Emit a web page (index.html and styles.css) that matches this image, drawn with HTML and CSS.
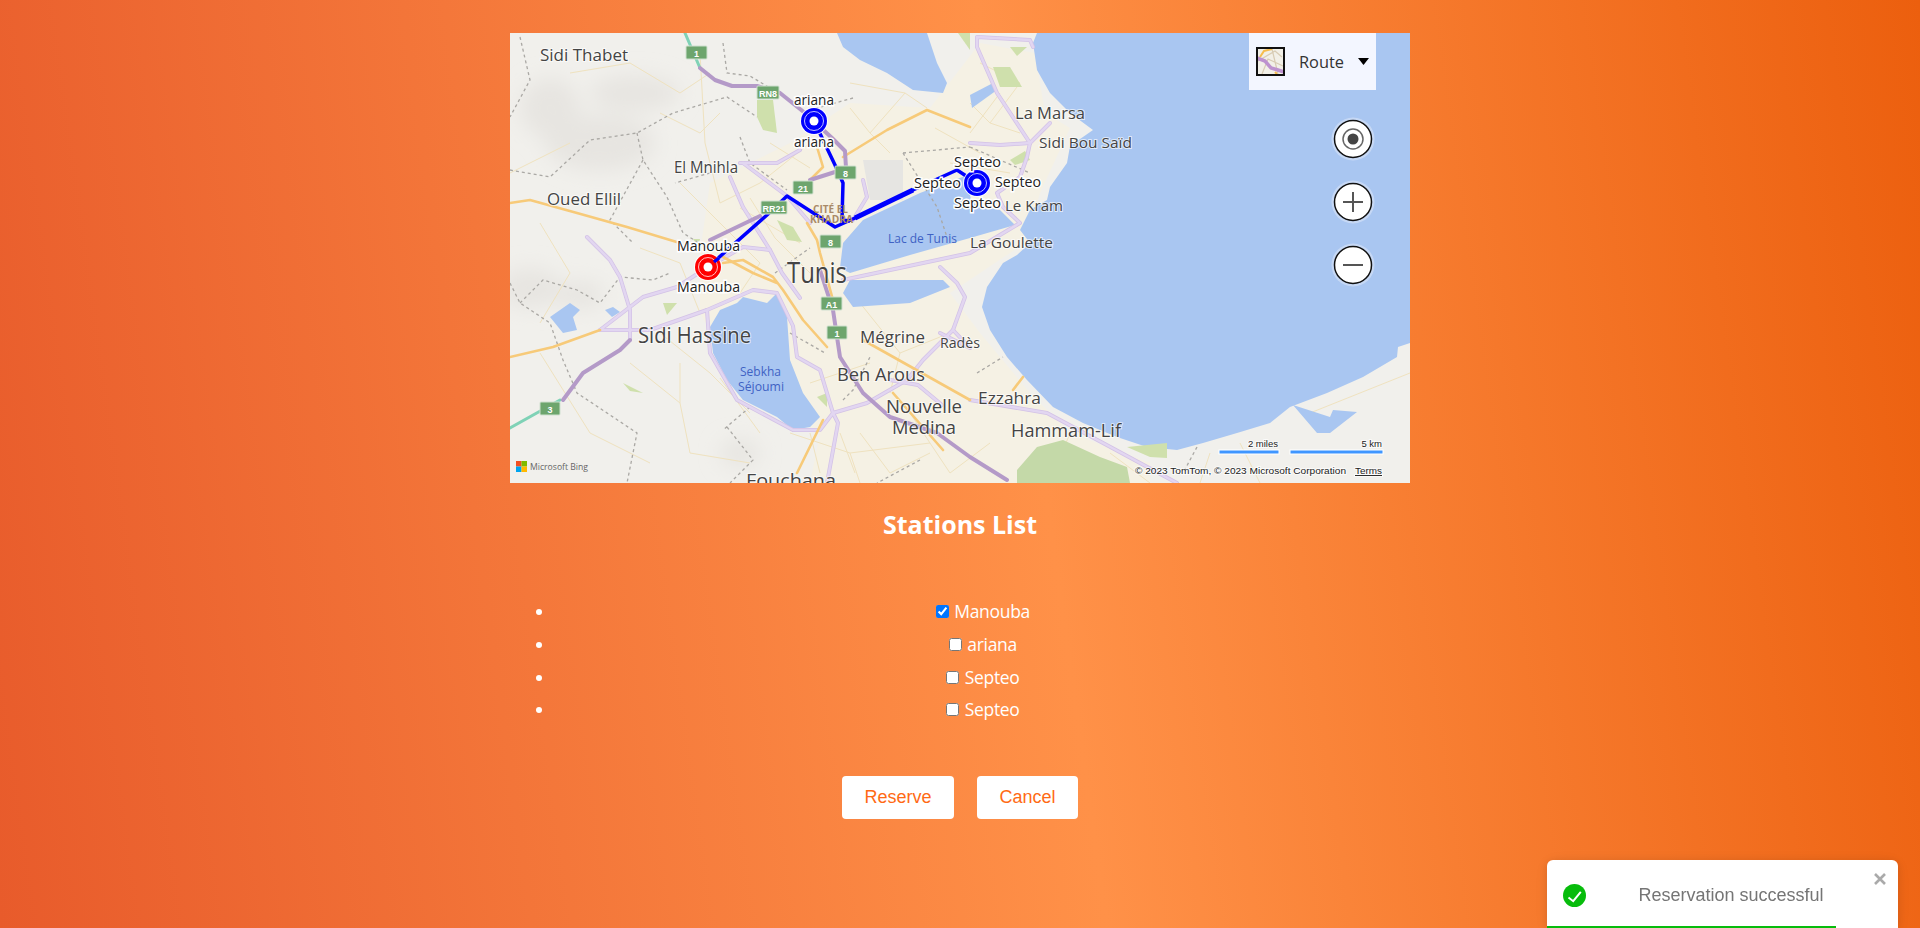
FILE: index.html
```html
<!DOCTYPE html>
<html lang="en">
<head>
<meta charset="utf-8">
<title>Stations List</title>
<link rel="stylesheet" href="styles.css">
</head>
<body>
<main class="page">
  <div class="map">
    <svg class="map-svg" viewBox="0 0 900 450" width="900" height="450" aria-label="Map of Tunis">
      <defs>
        <filter id="blur" x="-40%" y="-40%" width="180%" height="180%"><feGaussianBlur stdDeviation="10"/></filter>
        <g id="sec">
          <path d="M90,297 133,264 167,254 198,234 233,214 260,217"/>
          <path d="M90,297 140,297 197,277 243,257 267,260 283,293 287,324 310,337 323,380 328,390 317,450"/>
          <path d="M197,277 200,320 227,367 283,397 310,397 323,380 357,370 397,347 413,327 443,297 455,264 447,250 430,234"/>
          <path d="M120,307 120,277 110,244 100,227 77,204"/>
          <path d="M220,144 233,174 260,217 272,240 290,265"/>
          <path d="M230,130 267,130 290,117"/>
          <path d="M233,130 277,163 300,190"/>
          <path d="M353,147 357,164 343,187"/>
          <path d="M333,247 460,220 510,190 493,174 487,160 510,144 517,124 520,110 487,60 467,14 467,4 520,7 523,14"/>
          <path d="M520,110 540,90"/>
          <path d="M460,110 490,112 520,110"/>
          <path d="M460,367 537,380 593,410 667,450"/>
          <path d="M430,300 460,315 443,297"/>
          <path d="M380,347 408,352 432,372"/>
        </g>
      </defs>

      <rect class="land" width="900" height="450"/>
      <g class="hills" filter="url(#blur)">
        <ellipse cx="90" cy="110" rx="55" ry="28"/>
        <ellipse cx="125" cy="60" rx="45" ry="18"/>
        <ellipse cx="40" cy="75" rx="30" ry="30"/>
        <ellipse cx="20" cy="255" rx="30" ry="20"/>
        <ellipse cx="70" cy="262" rx="25" ry="14"/>
        <ellipse cx="230" cy="420" rx="20" ry="14"/>
      </g>
      <path class="city" d="M200,150 280,110 340,70 420,75 470,10 525,20 535,80 560,95 530,160 515,210 440,260 470,300 520,360 560,400 640,430 640,450 300,450 310,400 230,350 190,280 190,220Z"/>
      <path class="airport" d="M353,127 393,127 393,167 360,167Z"/>
      <path class="minor" d="M0,140 60,110M60,40 120,30 170,60 200,40M190,20 195,110 210,170M150,80 190,100 210,80M30,190 60,240 30,290M130,215 170,230 190,280M150,300 200,340 240,380M30,320 80,400 140,430M120,330 170,370 170,330M170,370 180,420 240,430M210,345 250,400M280,400 340,420 420,410M340,420 350,450M230,175 290,210M210,170 250,150 300,110M340,50 395,60 417,75M395,60 360,100 380,120M360,100 340,75M470,30 510,50 480,90 510,100M480,90 460,70M490,60 460,100M425,95 470,120M440,130 500,140M350,270 390,320 380,360M390,320 440,300M300,350 360,330M300,400 310,440M560,400 540,450M600,420 640,450M700,420 690,450M800,380 900,340M730,410 750,450M210,190 250,230 230,260M170,150 210,190M240,165 265,205 300,240M260,110 300,135M350,400 380,440 420,420M330,400 345,440M400,380 440,440 480,410"/>
      <g class="water">
        <path d="M327,0 333,14 350,27 377,40 403,57 433,60 437,50 427,30 417,0Z"/>
        <path d="M460,62 483,50 487,57 462,75Z"/>
        <path d="M527,0 523,10 527,37 540,60 560,80 583,97 560,113 557,130 540,154 537,167 520,177 510,197 520,210 507,222 493,230 477,254 472,274 480,297 497,324 517,347 543,374 573,390 607,404 637,414 667,417 693,410 727,400 760,390 780,374 817,360 853,344 887,324 888,314 900,310 900,0Z"/>
        <path d="M330,235 333,210 353,187 410,160 455,143 462,170 490,177 505,192 460,205 400,222 340,240Z"/>
        <path d="M340,247 333,260 343,274 400,270 440,254 433,247Z"/>
        <path d="M233,264 257,270 267,260 277,284 280,327 293,360 310,384 300,394 283,397 267,384 233,367 217,347 203,320 200,294 210,277 227,270Z"/>
        <path d="M40,284 60,270 70,277 63,284 67,297 53,300Z"/>
        <path d="M95,277 103,274 110,279 102,284Z"/>
        <path d="M783,372 807,400 820,400 847,379 823,377 820,384Z"/>
      </g>
      <g class="green">
        <path d="M247,67 263,67 267,100 253,97 247,84Z"/>
        <path d="M483,34 500,34 512,54 490,54Z"/>
        <path d="M500,14 517,14 507,23Z"/>
        <path d="M267,187 283,194 292,209 277,207Z"/>
        <path d="M153,270 167,270 157,282Z"/>
        <path d="M113,350 133,360 120,358Z"/>
        <path d="M307,364 317,360 317,374Z"/>
        <path d="M448,0 460,0 460,17Z"/>
        <path d="M183,206 190,206 188,214Z"/>
        <path d="M500,127 515,118 520,127 505,132Z"/>
        <path d="M617,414 657,410 657,425 640,424Z"/>
      </g>
      <path class="forest" d="M507,437 527,414 553,407 590,424 617,434 620,450 507,450Z"/>
      <path class="dashed" d="M10,4 20,47 0,84M0,137 40,144 80,107 127,100 163,80 217,64 247,84M343,65 300,77M213,10 217,40 240,43 290,73M230,104 240,130 277,157M127,100 133,127 157,164 173,200 200,217M133,127 100,187 123,210M0,250 10,270 40,290 53,327 67,360 127,400 117,450M10,270 33,247 67,257 90,270 110,244 143,247 160,240M217,394 243,427 220,450M240,374 213,397M333,367 343,357 360,324M410,427 367,450M687,414 673,440M467,340 493,324M393,120 427,174 437,204M393,120 460,114M460,114 520,140M280,300 315,320M200,140 165,150M265,240 300,215"/>
      <g fill="none" stroke-linejoin="round" stroke-linecap="round">
        <use href="#sec" class="sec-edge"/>
        <use href="#sec" class="sec-fill"/>
        <path class="teal" d="M175,0 190,35M50,367 0,395"/>
        <path class="orange" d="M0,170 20,167 67,180 117,194 170,210M213,224 243,240 267,250M0,324 43,314 90,297M213,230 233,227 263,244 273,257 293,287 317,314M333,124 377,97 417,77 460,94M307,114 313,134 300,147M297,190 307,207 310,220 323,267M383,360 433,417M313,387 287,440M513,344 503,357M353,307 460,367"/>
        <path class="motor" d="M190,35 205,47 222,53 247,53 270,60 295,80 322,105 335,118 336,135M300,147 325,139M200,207 250,183M120,307 110,317 73,340 53,367M310,237 323,277 330,324 353,360 380,384 427,400 460,424 497,447"/>
      </g>

      <path class="route" d="M198,234 257,182 277,163 325,194 345,185 403,157 447,137 467,150"/>
      <path class="route" d="M304,88 325,132 333,150 332,187 340,188"/>
      <path class="route route-wide" d="M345,185 403,157"/>

      <g class="shields">
        <rect x="176" y="13" width="21" height="13" rx="1"/>
        <rect x="247" y="53" width="22" height="13" rx="1"/>
        <rect x="325" y="133" width="21" height="13" rx="1"/>
        <rect x="283" y="148" width="20" height="13" rx="1"/>
        <rect x="251" y="168" width="26" height="13" rx="1"/>
        <rect x="310" y="202" width="21" height="13" rx="1"/>
        <rect x="311" y="264" width="21" height="13" rx="1"/>
        <rect x="317" y="293" width="20" height="13" rx="1"/>
        <rect x="30" y="369" width="20" height="13" rx="1"/>
      </g>
      <g class="shield-text">
        <text x="186.5" y="23.5">1</text>
        <text x="258" y="63.5">RN8</text>
        <text x="335.5" y="143.5">8</text>
        <text x="293" y="158.5">21</text>
        <text x="264" y="178.5">RR21</text>
        <text x="320.5" y="212.5">8</text>
        <text x="321.5" y="274.5">A1</text>
        <text x="327" y="303.5">1</text>
        <text x="40" y="379.5">3</text>
      </g>

      <g class="place">
        <text x="30" y="28" textLength="88" lengthAdjust="spacingAndGlyphs">Sidi Thabet</text>
        <text class="s16" x="164" y="140" textLength="64" lengthAdjust="spacingAndGlyphs">El Mnihla</text>
        <text x="37" y="172" textLength="74" lengthAdjust="spacingAndGlyphs">Oued Ellil</text>
        <text class="s29" x="277" y="250" textLength="60" lengthAdjust="spacingAndGlyphs">Tunis</text>
        <text class="s21" x="128" y="310" textLength="113" lengthAdjust="spacingAndGlyphs">Sidi Hassine</text>
        <text x="350" y="310" textLength="65" lengthAdjust="spacingAndGlyphs">Mégrine</text>
        <text class="s14" x="430" y="315" textLength="40" lengthAdjust="spacingAndGlyphs">Radès</text>
        <text class="s19" x="327" y="348" textLength="88" lengthAdjust="spacingAndGlyphs">Ben Arous</text>
        <text class="s19" x="376" y="380" textLength="76" lengthAdjust="spacingAndGlyphs">Nouvelle</text>
        <text class="s19" x="382" y="401" textLength="64" lengthAdjust="spacingAndGlyphs">Medina</text>
        <text class="s19" x="236" y="454" textLength="90" lengthAdjust="spacingAndGlyphs">Fouchana</text>
        <text x="505" y="86" textLength="70" lengthAdjust="spacingAndGlyphs">La Marsa</text>
        <text class="s15" x="529" y="115" textLength="93" lengthAdjust="spacingAndGlyphs">Sidi Bou Saïd</text>
        <text class="s15" x="495" y="178" textLength="58" lengthAdjust="spacingAndGlyphs">Le Kram</text>
        <text class="s15" x="460" y="215" textLength="83" lengthAdjust="spacingAndGlyphs">La Goulette</text>
        <text x="468" y="371" textLength="63" lengthAdjust="spacingAndGlyphs">Ezzahra</text>
        <text class="s19" x="501" y="404" textLength="110" lengthAdjust="spacingAndGlyphs">Hammam-Lif</text>
      </g>
      <g class="lake-name">
        <text x="230" y="343" textLength="41" lengthAdjust="spacingAndGlyphs">Sebkha</text>
        <text x="228" y="358" textLength="46" lengthAdjust="spacingAndGlyphs">Séjoumi</text>
        <text x="378" y="210" textLength="69" lengthAdjust="spacingAndGlyphs">Lac de Tunis</text>
      </g>
      <g class="district">
        <text x="303" y="180" textLength="35" lengthAdjust="spacingAndGlyphs">CITÉ EL</text>
        <text x="300" y="190" textLength="43" lengthAdjust="spacingAndGlyphs">KHADRA</text>
      </g>

      <g class="pin pin-blue">
        <circle class="pin-halo" cx="304" cy="88" r="14"/><circle class="pin-outer" cx="304" cy="88" r="13"/><circle class="pin-ring" cx="304" cy="88" r="9.5"/><circle class="pin-dot" cx="304" cy="88" r="4.5"/>
        <circle class="pin-halo" cx="467" cy="150" r="14"/><circle class="pin-outer" cx="467" cy="150" r="13"/><circle class="pin-ring" cx="467" cy="150" r="9.5"/><circle class="pin-dot" cx="467" cy="150" r="4.5"/>
      </g>
      <g class="pin pin-red">
        <circle class="pin-halo" cx="198" cy="234" r="14"/><circle class="pin-outer" cx="198" cy="234" r="13"/><circle class="pin-ring" cx="198" cy="234" r="9.5"/><circle class="pin-dot" cx="198" cy="234" r="4.5"/>
      </g>

      <g class="pin-label">
        <text x="284" y="72" textLength="40" lengthAdjust="spacingAndGlyphs">ariana</text>
        <text x="284" y="114" textLength="40" lengthAdjust="spacingAndGlyphs">ariana</text>
        <text x="167" y="218" textLength="63" lengthAdjust="spacingAndGlyphs">Manouba</text>
        <text x="167" y="259" textLength="63" lengthAdjust="spacingAndGlyphs">Manouba</text>
        <text x="444" y="134" textLength="47" lengthAdjust="spacingAndGlyphs">Septeo</text>
        <text x="404" y="155" textLength="47" lengthAdjust="spacingAndGlyphs">Septeo</text>
        <text x="485" y="154" textLength="46" lengthAdjust="spacingAndGlyphs">Septeo</text>
        <text x="444" y="175" textLength="47" lengthAdjust="spacingAndGlyphs">Septeo</text>
      </g>
      <path class="route" d="M204,229 209,225"/>

      <rect class="type-panel" x="739" y="0" width="127" height="57"/>
      <rect class="type-bg" x="747" y="15" width="27" height="27"/>
      <path class="type-road-thin" d="M748,28 765,18 772,24M752,41 758,26 773,33M762,16 768,41"/>
      <path class="type-road-orange" d="M750,24 754,18 762,16M765,39 767,41"/>
      <path class="type-road-purple" d="M747,25 755,28 761,35 768,37 774,39"/>
      <rect class="type-frame" x="747" y="15" width="27" height="27"/>
      <text class="type-name" x="789" y="35" textLength="45" lengthAdjust="spacingAndGlyphs">Route</text>
      <path class="type-caret" d="M848,25 859,25 853.500,32Z"/>

      <g class="ctl">
        <circle class="ctl-halo" cx="843" cy="106" r="21.500"/><circle class="ctl-btn" cx="843" cy="106" r="18.500"/>
        <circle class="ctl-ring" cx="843" cy="106" r="10"/><circle class="ctl-dot" cx="843" cy="106" r="5.500"/>
        <circle class="ctl-halo" cx="843" cy="169" r="21.500"/><circle class="ctl-btn" cx="843" cy="169" r="18.500"/>
        <path class="ctl-line" d="M833,169 853,169M843,159 843,179"/>
        <circle class="ctl-halo" cx="843" cy="232" r="21.500"/><circle class="ctl-btn" cx="843" cy="232" r="18.500"/>
        <path class="ctl-line" d="M833,232 853,232"/>
      </g>

      <rect class="ms-r" x="6" y="428" width="5.500" height="5.500"/>
      <rect class="ms-g" x="11.500" y="428" width="5.500" height="5.500"/>
      <rect class="ms-b" x="6" y="433.500" width="5.500" height="5.500"/>
      <rect class="ms-y" x="11.500" y="433.500" width="5.500" height="5.500"/>
      <text class="bing" x="20" y="437" textLength="58" lengthAdjust="spacingAndGlyphs">Microsoft Bing</text>

      <rect class="scale" x="709" y="417" width="60" height="4"/>
      <rect class="scale" x="780" y="417" width="93" height="4"/>
      <g class="small">
        <text class="end" x="768" y="413.500">2 miles</text>
        <text class="end" x="872" y="413.500">5 km</text>
        <text x="625" y="441" textLength="211" lengthAdjust="spacingAndGlyphs">© 2023 TomTom, © 2023 Microsoft Corporation</text>
        <text class="terms" x="845" y="441" textLength="27" lengthAdjust="spacingAndGlyphs">Terms</text>
      </g>
    </svg>
  </div>

  <h2 class="title">Stations List</h2>

  <ul class="stations">
    <li><label><input type="checkbox" checked> Manouba</label></li>
    <li><label><input type="checkbox"> ariana</label></li>
    <li><label><input type="checkbox"> Septeo</label></li>
    <li><label><input type="checkbox"> Septeo</label></li>
  </ul>

  <div class="actions">
    <button class="btn" type="button">Reserve</button>
    <button class="btn" type="button">Cancel</button>
  </div>
</main>

<div class="toast" role="alert">
  <svg class="toast-icon" viewBox="0 0 23 23" width="23" height="23" aria-hidden="true">
    <circle class="toast-disc" cx="11.500" cy="11.500" r="11.500"/>
    <path class="toast-check" d="M5.500,13.500 10.200,17.200 17.800,7.800"/>
  </svg>
  <div class="toast-text">Reservation successful</div>
  <svg class="toast-close" viewBox="0 0 12 12" width="12" height="12" aria-hidden="true">
    <path d="M1,1 11,11M11,1 1,11"/>
  </svg>
  <div class="toast-bar"></div>
</div>
</body>
</html>
```
FILE: styles.css
```css
* { box-sizing: border-box; }

html, body { height: 100%; margin: 0; }

body {
  overflow: hidden;
  background: linear-gradient(82deg, #e85b2b 0%, #ff9148 54%, #ec5f0e 100%);
  font-family: "Open Sans", "Noto Sans", sans-serif;
  color: #fff;
}

.page { width: 900px; margin: 0 auto; padding-top: 33px; }

.map { height: 450px; overflow: hidden; }
.map-svg { display: block; }

.land { fill: #f1f0ec; }
.hills { fill: #e7e5e1; }
.city { fill: #f5f1e4; }
.airport { fill: #e6e5e2; }
.minor { fill: none; stroke: #efe2bf; stroke-width: 1; }
.water { fill: #a9c6f1; }
.green { fill: #cfe0ac; }
.forest { fill: #c4d9a8; }
.dashed { fill: none; stroke: #aaa8a4; stroke-width: 1.300; stroke-dasharray: 3 3; }
.sec-edge { stroke: #d3c2e6; stroke-width: 4; }
.sec-fill { stroke: #e2d6f1; stroke-width: 2.500; }
.teal { stroke: #7fd2b6; stroke-width: 3; }
.orange { stroke: #f7ca79; stroke-width: 2.600; }
.motor { stroke: #b49ac8; stroke-width: 4; }

.shields { fill: #6da56d; stroke: #cfe0cf; stroke-width: 1; }
.shield-text text {
  fill: #fff;
  font: 700 9px "Liberation Sans", Arial, sans-serif;
  text-anchor: middle;
}

.place text {
  fill: #444;
  font-size: 16px;
  paint-order: stroke;
  stroke: rgba(255, 255, 255, .65);
  stroke-width: 2px;
}
.place .s14 { font-size: 14px; }
.place .s15 { font-size: 15px; }
.place .s16 { font-size: 16px; }
.place .s19 { font-size: 19px; }
.place .s21 { font-size: 21px; }
.place .s29 { font-size: 29px; }

.lake-name text { fill: #3f62c4; font-size: 13px; }
.district text { fill: #a98a68; font-size: 10px; font-weight: 700; }

.route { fill: none; stroke: #0000ff; stroke-width: 3.500; stroke-linejoin: round; }
.route-wide { stroke-width: 5; }

.pin-halo { fill: rgba(255, 255, 255, .85); }
.pin-blue .pin-outer { fill: #0000ff; }
.pin-red .pin-outer { fill: #ff0000; }
.pin-ring { fill: none; stroke: rgba(255, 255, 255, .75); stroke-width: 1; }
.pin-dot { fill: #fff; }

.pin-label text {
  fill: #222;
  font-size: 15px;
  paint-order: stroke;
  stroke: #fff;
  stroke-width: 3px;
}

.type-panel { fill: #f3f6ff; }
.type-bg { fill: #f2f0e8; }
.type-road-thin { fill: none; stroke: #d8ccb4; stroke-width: 1.200; }
.type-road-orange { fill: none; stroke: #f6bd4e; stroke-width: 2; }
.type-road-purple { fill: none; stroke: #bd92cf; stroke-width: 3.500; }
.type-frame { fill: none; stroke: #111; stroke-width: 2; }
.type-name { fill: #333; font-size: 17px; }
.type-caret { fill: #000; }

.ctl-halo { fill: #c6d8f5; }
.ctl-btn { fill: #fff; stroke: #111; stroke-width: 1.500; }
.ctl-ring { fill: none; stroke: #666; stroke-width: 1.500; }
.ctl-dot { fill: #444; }
.ctl-line { fill: none; stroke: #555; stroke-width: 2; }

.ms-r { fill: #f25022; }
.ms-g { fill: #7fba00; }
.ms-b { fill: #00a4ef; }
.ms-y { fill: #ffb900; }
.bing { fill: #666; font-size: 9.500px; }

.scale { fill: #3f96ff; stroke: #fff; stroke-width: 1; }
.small text {
  fill: #222;
  font: 9.500px "Liberation Sans", Arial, sans-serif;
  paint-order: stroke;
  stroke: rgba(255, 255, 255, .7);
  stroke-width: 2px;
}
.small .end { text-anchor: end; }
.small .terms { text-decoration: underline; }

.title {
  margin: 25px 0 0;
  font-size: 25px;
  line-height: 32px;
  font-weight: 700;
  text-align: center;
}

.stations { margin: 55px 0 0; padding: 0 3px 0 45px; font-size: 17.500px; letter-spacing: -.3px; }
.stations li { height: 32.800px; line-height: 32.800px; text-align: center; }
.stations input { margin: 1px 1px 7px 4px; }

.actions { display: flex; justify-content: center; gap: 23px; margin-top: 50px; }

.btn {
  height: 43px;
  padding: 0 22.500px;
  border: 0;
  border-radius: 4px;
  background: #fff;
  color: #ff6a14;
  font: 18px "Liberation Sans", Arial, sans-serif;
}

.toast {
  position: fixed;
  top: 860px;
  right: 22px;
  bottom: 0;
  width: 351px;
  display: flex;
  align-items: center;
  padding: 2px 22px 0 16px;
  background: #fff;
  border-radius: 6px 6px 0 0;
  box-shadow: 0 1px 10px rgba(0, 0, 0, .1), 0 2px 15px rgba(0, 0, 0, .05);
  font: 18px "Liberation Sans", Arial, sans-serif;
  color: #757575;
}
.toast-icon { flex: none; }
.toast-disc { fill: #07bc0c; }
.toast-check { fill: none; stroke: #fff; stroke-width: 2; }
.toast-text { flex: 1; text-align: center; }
.toast-close { position: absolute; top: 13px; right: 12px; }
.toast-close path { fill: none; stroke: #aaa; stroke-width: 2.600; }
.toast-bar { position: absolute; left: 0; bottom: 0; width: 289px; height: 2px; background: #07bc0c; }
```
